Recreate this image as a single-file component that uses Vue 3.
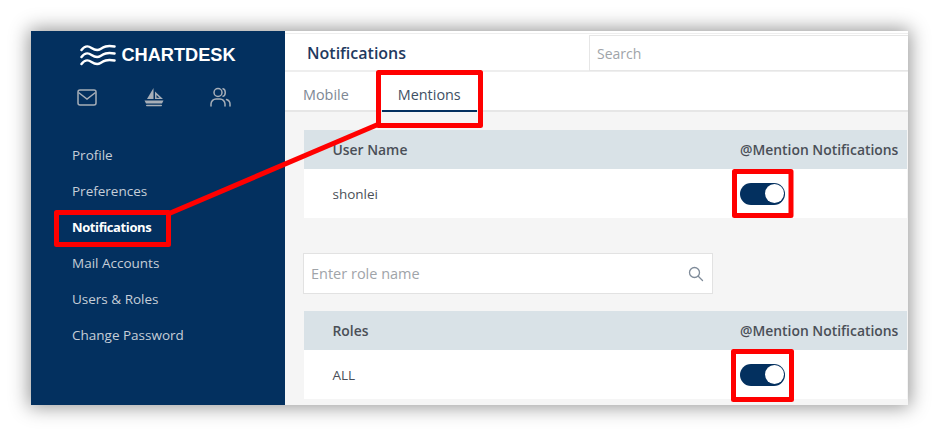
<template>
  <div class="page">
    <div class="window">
      <aside class="sidebar">
        <div class="logo">
          <svg class="waves" width="36" height="22" viewBox="0 0 36 22" fill="none" stroke="#fff" stroke-width="2.500" stroke-linecap="round">
            <path d="M1.500 6c4-5 7-4 10-2s6 3 9 1 6-4 14-2.500" />
            <path d="M1.500 13c4-5 7-4 10-2s6 3 9 1 6-4 14-2.500" />
            <path d="M1.500 20c4-5 7-4 10-2s6 3 9 1 6-4 14-2.500" />
          </svg>
          <span class="logo-text">CHARTDESK</span>
        </div>
        <div class="side-icons">
          <svg width="20" height="17" viewBox="0 0 20 17" fill="none" stroke="#a7aeb8" stroke-width="1.500">
            <rect x="1" y="1" width="18" height="15" rx="2" />
            <path d="M1.500 3.500 10 10l8.500-6.500" />
          </svg>
          <svg width="22" height="20" viewBox="0 0 22 20" fill="#a7aeb8">
            <path d="M10.500 1v11H4z" />
            <path d="M12 4.500l8 7.500h-8zM13.500 8v2.700h3z" fill-rule="evenodd" />
            <path d="M1.500 13.500h19l-1.500 3H3z" />
            <rect x="3" y="17.700" width="16" height="1.600" rx=".8" />
          </svg>
          <svg width="21" height="20" viewBox="0 0 21 20" fill="none" stroke="#a7aeb8" stroke-width="1.500" stroke-linecap="round">
            <circle cx="8" cy="5.500" r="4" />
            <path d="M1 19v-2c0-3 2.500-5 5-5h4c2.500 0 5 2 5 5v2" />
            <path d="M13 1.800c3 .6 3 6.800 0 7.400M16.500 12.500c2 .7 3.500 2.500 3.500 4.500v2" />
          </svg>
        </div>
        <nav class="menu">
          <a v-for="item in menu" :key="item" :class="{ active: item === 'Notifications' }">{{ item }}</a>
        </nav>
      </aside>

      <main class="main">
        <header class="head">
          <h1>Notifications</h1>
          <div class="search">Search</div>
        </header>
        <div class="tabs">
          <span class="tab">Mobile</span>
          <span class="tab current">Mentions</span>
        </div>
        <div class="content">
          <div class="row-head">
            <span>User Name</span>
            <span class="col">@Mention Notifications</span>
          </div>
          <div class="row">
            <span>shonlei</span>
            <span class="col"><i class="toggle"></i></span>
          </div>
          <div class="role-input">
            <span>Enter role name</span>
            <svg width="16" height="16" viewBox="0 0 16 16" fill="none" stroke="#7f8b99" stroke-width="1.300" stroke-linecap="round">
              <circle cx="6.500" cy="6.500" r="5" />
              <path d="m10.500 10.500 4 4" />
            </svg>
          </div>
          <div class="row-head">
            <span>Roles</span>
            <span class="col">@Mention Notifications</span>
          </div>
          <div class="row">
            <span>ALL</span>
            <span class="col"><i class="toggle"></i></span>
          </div>
        </div>
      </main>
    </div>

    <!-- callouts drawn over the screenshot -->
    <svg class="callouts" width="940" height="437" viewBox="0 0 940 437" fill="none" stroke="#ff0000" stroke-width="5" stroke-linejoin="round">
      <rect x="56.500" y="212.500" width="112" height="32" />
      <path d="M168 214 379 124" />
      <rect x="378.500" y="72.500" width="102" height="53" />
      <rect x="734.500" y="171.500" width="56.500" height="44" />
      <rect x="733.500" y="351.500" width="58" height="48" />
    </svg>
  </div>
</template>

<script setup>
const menu = ['Profile', 'Preferences', 'Notifications', 'Mail Accounts', 'Users & Roles', 'Change Password']
</script>

<style>
html,
body {
  background: #fff;
  overflow: hidden;
}
</style>

<style scoped>
.page {
  position: relative;
  width: 940px;
  height: 437px;
  padding: 31px 0 0 31px;
  box-sizing: border-box;
  font-family: "Open Sans", "Liberation Sans", sans-serif;
  font-size: 13.500px;
  color: #4a4f57;
}
.window {
  display: flex;
  width: 877px;
  height: 374px;
  background: #fff;
  overflow: hidden;
  box-shadow: 0 0 18px 2px rgba(0, 0, 0, 0.42);
}
.sidebar {
  flex: 0 0 254px;
  background: #03305f;
  box-sizing: border-box;
}
.logo {
  display: flex;
  align-items: center;
  justify-content: center;
  gap: 5px;
  height: 22px;
  margin-top: 13px;
}
.logo-text {
  color: #fff;
  font-family: "Liberation Sans", sans-serif;
  font-size: 18.200px;
  font-weight: 700;
}
.side-icons {
  display: flex;
  justify-content: space-between;
  align-items: center;
  height: 20px;
  margin: 21px 54px 0 46px;
}
.menu {
  display: flex;
  flex-direction: column;
  margin-top: 30px;
  padding-left: 41px;
}
.menu a {
  height: 36px;
  line-height: 36px;
  color: #c6ced8;
}
.menu a.active {
  color: #fff;
  font-size: 13px;
  font-weight: 700;
  letter-spacing: -0.400px;
}
.main {
  flex: 1;
  min-width: 0;
  display: flex;
  flex-direction: column;
  padding-top: 2px;
}
.head {
  display: flex;
  align-items: center;
  height: 35px;
  padding-top: 1px;
  padding-left: 22px;
  border-top: 1px solid #eee;
  border-bottom: 2px solid #eee;
}
.head h1 {
  margin: 0;
  width: 282px;
  font-size: 16px;
  font-weight: 600;
  color: #1f3a5f;
}
.search {
  flex: 1;
  height: 36px;
  box-sizing: border-box;
  line-height: 36px;
  padding-left: 7px;
  border: 1px solid #e6e6e6;
  border-right: 0;
  font-size: 14px;
  color: #a0a4a9;
}
.tabs {
  display: flex;
  height: 38px;
  padding-left: 18px;
  border-bottom: 2px solid #e6e6e6;
}
.tab {
  font-size: 14.400px;
  line-height: 46px;
  color: #7d8794;
}
.tab.current {
  margin-left: 33px;
  padding: 0 16px;
  color: #3e5064;
  border-bottom: 2px solid #03305f;
  height: 38px;
}
.content {
  flex: 1;
  background: #f5f5f5;
  padding: 18px 1px 0 19px;
}
.row-head,
.row {
  display: flex;
  align-items: center;
  padding-left: 28.500px;
}
.row-head {
  height: 39px;
  background: #d9e2e7;
  font-size: 13.900px;
  font-weight: 600;
  color: #4a4f57;
}
.row {
  height: 49px;
  background: #fff;
}
.col {
  position: absolute;
  left: 740px;
}
.toggle {
  display: block;
  position: relative;
  width: 45px;
  height: 22px;
  border-radius: 11px;
  background: #03305f;
}
.toggle::after {
  content: "";
  position: absolute;
  right: 1.500px;
  top: 1.500px;
  width: 19px;
  height: 19px;
  border-radius: 50%;
  background: #fff;
}
.role-input {
  display: flex;
  align-items: center;
  justify-content: space-between;
  box-sizing: border-box;
  width: 410px;
  height: 41px;
  margin: 35px 0 17px -1px;
  padding: 0 8px 0 7px;
  background: #fff;
  border: 1px solid #e2e2e2;
  font-size: 14.500px;
  color: #a0a4a9;
}
.callouts {
  position: absolute;
  left: 0;
  top: 0;
  pointer-events: none;
}
</style>
